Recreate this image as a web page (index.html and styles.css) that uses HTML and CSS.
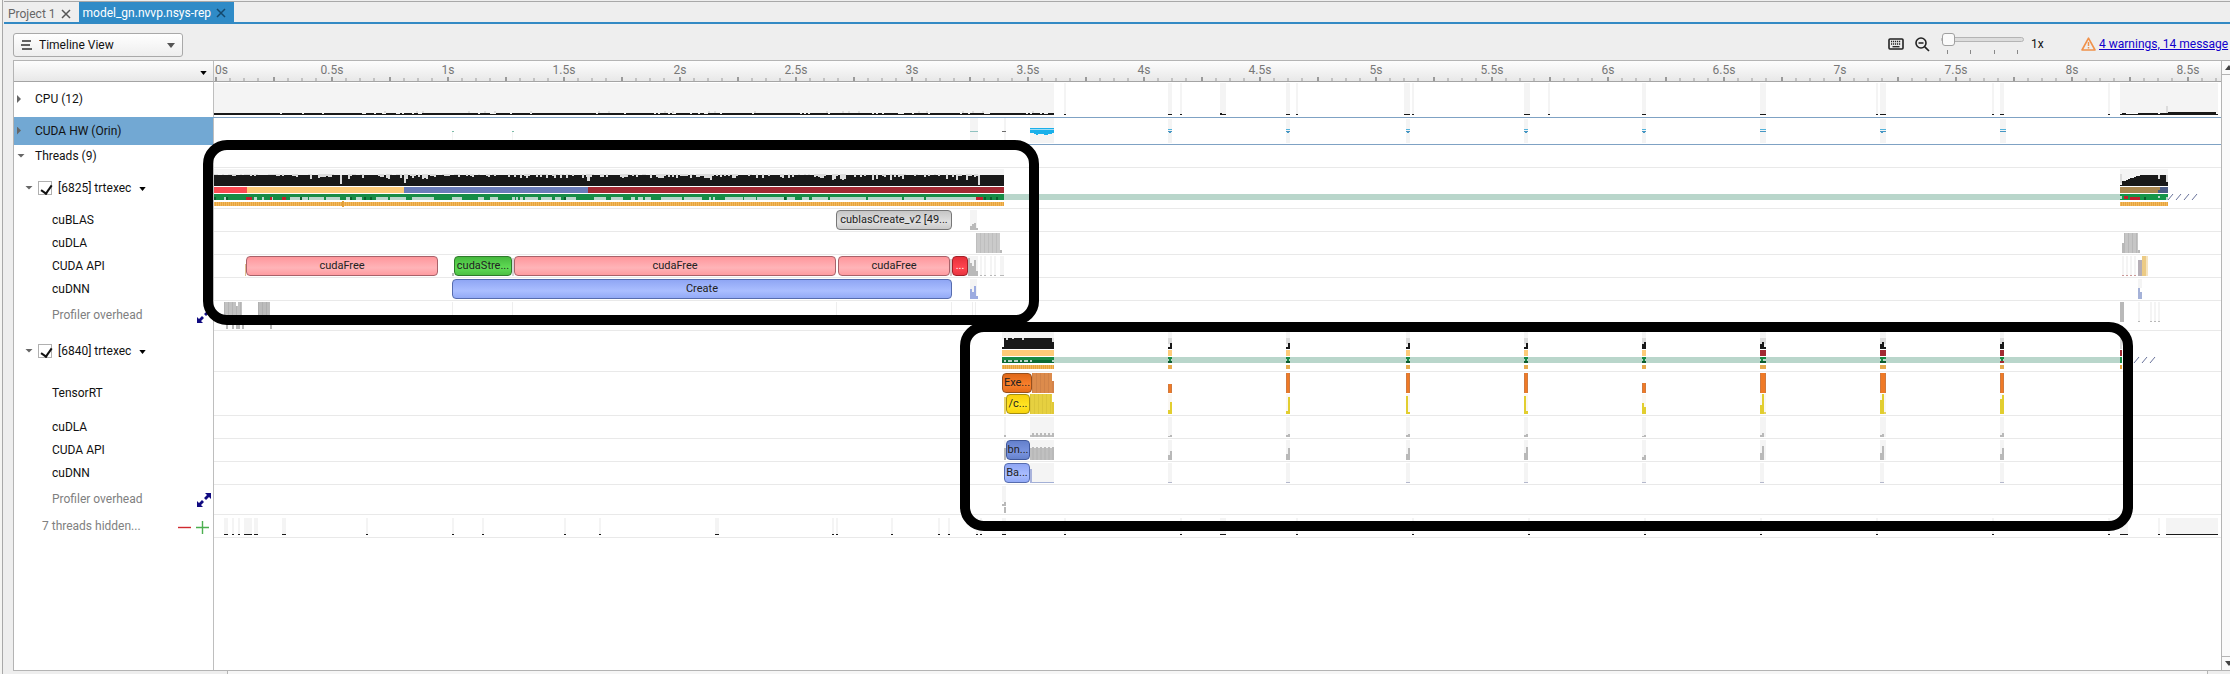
FILE: index.html
```html
<!DOCTYPE html>
<html lang="en">
<head>
<meta charset="utf-8">
<title>model_gn.nvvp.nsys-rep</title>
<link rel="stylesheet" href="styles.css">
</head>
<body>
<div class="window">
  <nav class="tabs">
    <div class="tab">
      <a class="tab-name" href="#project">Project 1</a>
      <button class="tab-close" aria-label="Close Project 1"><svg width="10" height="10" viewBox="0 0 10 10"><path d="M1 1l8 8M9 1l-8 8"/></svg></button>
    </div>
    <div class="tab tab-active">
      <a class="tab-name" href="#report">model_gn.nvvp.nsys-rep</a>
      <button class="tab-close" aria-label="Close report"><svg width="10" height="10" viewBox="0 0 10 10"><path d="M1 1l8 8M9 1l-8 8"/></svg></button>
    </div>
  </nav>

  <header class="toolbar">
    <div class="view-picker">
      <svg class="view-icon" width="11" height="10" viewBox="0 0 11 10"><path d="M1 1h9M0 5h9M1 9h10"/></svg>
      <select class="view-select" aria-label="View"><option>Timeline View</option></select>
      <svg class="view-caret" width="8" height="5" viewBox="0 0 8 5"><path d="M0 0h8L4 5z"/></svg>
    </div>
    <div class="tools">
      <button class="tool" aria-label="Keyboard shortcuts"><svg width="16" height="12" viewBox="0 0 16 12"><rect x="1" y="1" width="14" height="10" rx="1" fill="none" stroke="#222" stroke-width="1.6"/><path d="M3 3.5h10M3 6h10" stroke="#222" stroke-width="1.4" stroke-dasharray="1.2 .8"/><path d="M4.5 8.7h7" stroke="#222" stroke-width="1.3"/></svg></button>
      <button class="tool" aria-label="Zoom out"><svg width="15" height="15" viewBox="0 0 15 15"><circle cx="6" cy="6" r="5" fill="none" stroke="#222" stroke-width="1.6"/><path d="M3.5 6h5M9.8 9.8l4.2 4.2" stroke="#222" stroke-width="1.7"/></svg></button>
      <label class="zoom">
        <input class="zoom-range" type="range" min="1" max="10" value="1" aria-label="Zoom">
        <span class="zoom-ticks"><i></i><i></i><i></i><i></i></span>
      </label>
      <span class="zoom-value">1x</span>
      <svg class="warn-icon" width="15" height="14" viewBox="0 0 15 14"><path d="M7.5 1.2L14 13H1z" fill="none" stroke="#f0914a" stroke-width="1.6" stroke-linejoin="round"/><path d="M7.5 5v4M7.5 10v1.6" stroke="#f0914a" stroke-width="1.5"/></svg>
      <a class="messages" href="#messages">4 warnings, 14 message</a>
    </div>
  </header>

  <main class="frame">
    <div class="timeline">
      <div class="row ruler-row">
        <div class="label corner"><button class="menu" aria-label="Row options"><svg width="7" height="4" viewBox="0 0 8 5"><path d="M0 0h8L4 5z"/></svg></button></div>
        <div class="track ruler" id="ruler"></div>
      </div>
      <div class="row cpu"><div class="label level-0"><span class="fold closed"></span>CPU (12)</div><div class="track" data-track="cpu"></div></div>
      <div class="row hw"><div class="label level-0"><span class="fold closed"></span>CUDA HW (Orin)</div><div class="track" data-track="hw"></div></div>
      <div class="row"><div class="label level-0"><span class="fold"></span>Threads (9)</div><div class="track"></div></div>

      <div class="row thread">
        <div class="label level-1"><span class="fold"></span><label class="pick"><input class="check" type="checkbox" checked>[6825] trtexec</label><button class="menu" aria-label="Thread 6825 options"><svg width="7" height="4" viewBox="0 0 8 5"><path d="M0 0h8L4 5z"/></svg></button></div>
        <div class="track" data-track="t1"></div>
      </div>
      <div class="row"><div class="label level-2">cuBLAS</div><div class="track" data-track="blas1"></div></div>
      <div class="row"><div class="label level-2">cuDLA</div><div class="track" data-track="dla1"></div></div>
      <div class="row"><div class="label level-2">CUDA API</div><div class="track" data-track="api1"></div></div>
      <div class="row"><div class="label level-2">cuDNN</div><div class="track" data-track="dnn1"></div></div>
      <div class="row overhead"><div class="label level-2 muted">Profiler overhead<svg class="expand" width="14" height="14" viewBox="0 0 14 14"><path d="M8 0h6v6l-2-2-3 3-2-2 3-3zM6 14H0V8l2 2 3-3 2 2-3 3z"/></svg></div><div class="track" data-track="prof1"></div></div>

      <div class="row thread">
        <div class="label level-1"><span class="fold"></span><label class="pick"><input class="check" type="checkbox" checked>[6840] trtexec</label><button class="menu" aria-label="Thread 6840 options"><svg width="7" height="4" viewBox="0 0 8 5"><path d="M0 0h8L4 5z"/></svg></button></div>
        <div class="track" data-track="t2"></div>
      </div>
      <div class="row tensor"><div class="label level-2">TensorRT</div><div class="track" data-track="trt"></div></div>
      <div class="row"><div class="label level-2">cuDLA</div><div class="track" data-track="dla2"></div></div>
      <div class="row"><div class="label level-2">CUDA API</div><div class="track" data-track="api2"></div></div>
      <div class="row"><div class="label level-2">cuDNN</div><div class="track" data-track="dnn2"></div></div>
      <div class="row overhead"><div class="label level-2 muted">Profiler overhead<svg class="expand" width="14" height="14" viewBox="0 0 14 14"><path d="M8 0h6v6l-2-2-3 3-2-2 3-3zM6 14H0V8l2 2 3-3 2 2-3 3z"/></svg></div><div class="track" data-track="prof2"></div></div>
      <div class="row">
        <div class="label hidden-threads muted">7 threads hidden...
          <span class="steppers">
            <button class="step" aria-label="Show fewer threads"><svg width="13" height="13" viewBox="0 0 13 13"><path d="M0 6.5h13" stroke="#d02a30" stroke-width="1.4"/></svg></button>
            <button class="step" aria-label="Show more threads"><svg width="13" height="13" viewBox="0 0 13 13"><path d="M0 6.5h13M6.5 0v13" stroke="#4caf50" stroke-width="1.4"/></svg></button>
          </span>
        </div>
        <div class="track" data-track="hidden"></div>
      </div>
      <div class="row filler"><div class="label"></div><div class="track"></div></div>

      <div class="marks">
        <div class="mark mark-setup"></div>
        <div class="mark mark-run"></div>
      </div>
    </div>
    <div class="scrollbar">
      <button class="scroll-button" aria-label="Scroll up"><svg width="8" height="5" viewBox="0 0 8 5"><path d="M0 5h8L4 0z"/></svg></button>
      <button class="scroll-button scroll-down" aria-label="Scroll down"><svg width="8" height="5" viewBox="0 0 8 5"><path d="M0 0h8L4 5z"/></svg></button>
    </div>
  </main>
  <footer class="hscroll"></footer>
</div>
<script src="script.js"></script>
</body>
</html>
```
FILE: styles.css
```css
* { box-sizing: border-box; }

body {
  margin: 0;
  background: #f4f4f2;
  color: #111;
  font: 12px/16px Roboto, "Liberation Sans", sans-serif;
}

button {
  border: 0;
  padding: 0;
  background: none;
  font: inherit;
  color: inherit;
}

svg { display: block; }

.window {
  display: flex;
  flex-direction: column;
  height: 100vh;
  margin-left: 2px;
  padding-top: 1px;
  border-left: 1px solid #a8a8a8;
  background: #eee;
  overflow: hidden;
}

/* Document tabs */
.tabs {
  display: flex;
  flex: none;
  height: 23px;
  margin-left: 1px;
  border-top: 1px solid #a8a8a8;
  border-bottom: 2px solid #338ac4;
}

.tab {
  display: flex;
  align-items: center;
  gap: 5px;
  padding: 3px 8px 0 4px;
  color: #666;
  font-size: 12px;
}

.tab-active {
  padding: 1px 8px 0 4px;
  background: #2f8bc7;
  color: #fff;
}

.tab-name { color: inherit; text-decoration: none; }
.tab-close svg { fill: none; stroke: #555; stroke-width: 1.5; }
.tab-active .tab-close svg { stroke: #14486c; }

/* Toolbar */
.toolbar {
  display: flex;
  flex: none;
  justify-content: space-between;
  height: 36px;
  padding-left: 10px;
}

.view-picker {
  position: relative;
  width: 170px;
  height: 24px;
  margin-top: 9px;
}

.view-select {
  appearance: none;
  width: 100%;
  height: 100%;
  padding: 0 24px 0 25px;
  border: 1px solid #a9a9a9;
  border-radius: 3px;
  background: linear-gradient(#fff, #eee);
  color: #111;
  font: inherit;
}

.view-icon, .view-caret { position: absolute; pointer-events: none; }
.view-icon { left: 8px; top: 7px; fill: none; stroke: #333; stroke-width: 1.6; }
.view-caret { right: 8px; top: 10px; fill: #555; }

.tools {
  display: flex;
  flex: none;
  align-items: center;
  width: 342px;
  padding-top: 4px;
  white-space: nowrap;
}

.tool { flex: none; margin-right: 11px; }
.zoom { flex: none; width: 83px; height: 24px; margin-right: 7px; }

.zoom-range {
  display: block;
  appearance: none;
  width: 83px;
  height: 14px;
  margin: 0;
  background: none;
}

.zoom-range::-webkit-slider-runnable-track {
  height: 5px;
  border: 1px solid #b4b4b4;
  border-radius: 3px;
  background: #ddd;
}

.zoom-range::-webkit-slider-thumb {
  appearance: none;
  width: 13px;
  height: 13px;
  margin-top: -5px;
  border: 1px solid #a0a0a0;
  border-radius: 3px;
  background: #fafafa;
}

.zoom-ticks {
  display: flex;
  justify-content: space-between;
  margin-top: 4px;
  padding: 0 6px;
}

.zoom-ticks i { width: 1px; height: 4px; background: #888; }
.zoom-value { flex: none; width: 50px; }
.warn-icon { flex: none; margin-right: 3px; }
.messages { color: #10c; }

/* Timeline */
.frame {
  display: flex;
  flex: 1;
  min-height: 0;
  margin-left: 10px;
  border: 1px solid #b4b4b4;
  border-right: 0;
  background: #fff;
}

.timeline {
  position: relative;
  display: flex;
  flex-direction: column;
  flex: 1;
  min-width: 0;
}

.row {
  display: grid;
  grid-template-columns: 200px minmax(0, 1fr);
  flex: none;
  height: 23px;
}

.label {
  display: flex;
  align-items: center;
  padding-bottom: 2px;
  border-right: 1px solid #bebebe;
  white-space: nowrap;
}

.track {
  position: relative;
  border-bottom: 1px solid #e9e9e9;
}

.chart { width: 100%; height: 100%; }

.ruler-row { height: 21px; }
.corner, .ruler {
  border-bottom: 1px solid #a4a4a4;
  background: linear-gradient(#fdfdfd, #e8e8e8);
}
.corner { justify-content: flex-end; padding: 3px 6px 0 0; }

.tick-label {
  position: absolute;
  top: 1px;
  transform: translateX(-50%);
  color: #777;
}
.tick-label:first-of-type { transform: none; }

.cpu { height: 36px; }
.hw { height: 27px; }
.thread { height: 41px; }
.overhead { height: 30px; }
.tensor { height: 44px; }
.filler { flex: 1; height: auto; }
.filler .track { border-bottom: 0; }

.cpu .track, .hw .track { border-bottom-color: #7fa2c4; }
.hw .label { background: #72a8d3; box-shadow: 0 -1px #72a8d3; }

.level-0 { gap: 10px; padding-left: 3px; }
.level-1 { gap: 5px; padding-left: 11px; }
.level-2 { padding-left: 38px; }
.hidden-threads { padding-left: 28px; }
.muted { color: #808080; }

.fold {
  flex: none;
  width: 8px;
  height: 4px;
  background: #666;
  clip-path: polygon(0 0, 100% 0, 50% 100%);
}
.fold.closed {
  width: 4px;
  height: 8px;
  margin-right: 4px;
  clip-path: polygon(0 0, 100% 50%, 0 100%);
}

.pick { display: flex; align-items: center; gap: 6px; }

.check {
  appearance: none;
  position: relative;
  width: 14px;
  height: 14px;
  margin: 0;
  border: 1px solid #b0b0b0;
  background: #fff;
}
.check:checked::after {
  content: "";
  position: absolute;
  left: 4px;
  top: 1px;
  width: 5px;
  height: 9px;
  border: solid #111;
  border-width: 0 2px 2px 0;
  transform: rotate(35deg);
}

.level-1 .menu { margin: 3px 0 0 3px; }
.expand { margin: 2px 2px 0 auto; fill: #100a80; }
.steppers { display: flex; gap: 5px; margin: 4px 4px 0 auto; }

/* Events on the tracks */
.event {
  position: absolute;
  top: 1px;
  height: 20px;
  border: 1px solid;
  border-radius: 4px;
  color: #222;
  font-size: 11px;
  line-height: 16px;
  text-align: center;
  white-space: nowrap;
}
.event.second { top: 22px; }
.pink { border-color: #a8626a; background: linear-gradient(#ff979c, #ffb4b8 60%, #ff9ca1); }
.green { border-color: #2f7a2c; background: linear-gradient(#46b83e, #60dc55 60%, #4cc043); }
.red { border-color: #a02028; background: linear-gradient(#e6303a, #ff4550 60%, #e83540); color: #fff; }
.gray { border-color: #777; background: linear-gradient(#c6c6c6, #e0e0e0 60%, #cacaca); }
.blue { border-color: #566cae; background: linear-gradient(#8fa6f4, #aabeff 60%, #93aaf6); }
.indigo { border-color: #40589c; background: linear-gradient(#6480cc, #7b95e0 60%, #6682cc); }
.orange { border-color: #96501e; background: linear-gradient(#e06818, #f9802c 60%, #e46c1c); }
.yellow { border-color: #a48e12; background: linear-gradient(#f8d00c, #ffe424 60%, #f8d40e); }

/* Callout boxes over the tracks */
.marks {
  position: absolute;
  inset: 0 0 0 200px;
  pointer-events: none;
}
.mark {
  position: absolute;
  border: 10px solid #000;
  border-radius: 24px;
}
.mark-setup { left: -11px; right: 58.9%; top: 79px; height: 185px; }
.mark-run { left: 37.17%; right: 4.4%; top: 261px; height: 209px; }

/* Scrollbars */
.scrollbar {
  display: flex;
  flex-direction: column;
  justify-content: space-between;
  flex: none;
  width: 9px;
  border-left: 1px solid #b4b4b4;
  background: #fafafa;
  overflow: hidden;
}
.scroll-button { width: 14px; height: 14px; padding-left: 3px; border-bottom: 1px solid #b4b4b4; }
.scroll-button svg { fill: #444; }
.scroll-down { border-top: 1px solid #b4b4b4; border-bottom: 0; }
.hscroll {
  flex: none;
  height: 3px;
  margin: 0 22px 0 224px;
  border: 1px solid #b4b4b4;
  border-width: 0 1px;
  background: #f6f6f6;
}
```
FILE: script.js
```js
// Horizontal units: 232 units per second, first visible unit at ORIGIN.
const ORIGIN = 214;
const SPAN = 2007;
const percent = (u) => (u / SPAN) * 100 + "%";

let seed = 7;
const random = () => (seed = (seed * 16807) % 2147483647) / 2147483647;

const LIGHT = "#f4f4f4", BLACK = "#191919", MINT = "#b9d6cb", GREEN = "#168c46",
  GOLD = "#e8a43c", PEACH = "#fdcb79", WINE = "#a32a33", GRAY = "#b9b9b9";

const rect = (x, y, w, h, fill) =>
  `<rect x="${x - ORIGIN}" y="${y}" width="${w}" height="${h}" fill="${fill}"/>`;

function stripes(x, end, y, h, a, b, step = 4) {
  let out = rect(x, y, end - x, h, a);
  for (let i = x; i < end; i += step) out += rect(i, y, 1, h, b);
  return out;
}

function usage(x, end, depth) {
  let out = rect(x, 1, end - x, 6, LIGHT) + rect(x, 7, end - x, 11, BLACK);
  for (let i = x; i < end; i += 2) {
    const r = random();
    if (r < 0.55) {
      const d = Math.floor(random() * depth);
      out += rect(i, 6, 2, 1 + d, "#dcdcdc");
    }
  }
  return out;
}

const clusters = [[1168, 4], [1286, 4], [1406, 4], [1524, 4], [1642, 4], [1760, 6], [1880, 6], [2000, 4]];
const tracks = {};

// CPU usage
tracks.cpu = () => {
  let out = rect(214, 1, 840, 30, LIGHT) + rect(214, 31, 840, 2, BLACK) + rect(2120, 1, 98, 30, LIGHT);
  for (let i = 280; i < 1050; i += 2) {
    if (random() < 0.15) out += rect(i, 31, 2, 1, LIGHT);
    if (random() < 0.05) out += rect(i, 29, 2, 2, "#dedede");
  }
  [[1064, 2], [1168, 4], [1180, 2], [1220, 6], [1286, 4], [1296, 2], [1404, 6], [1412, 2], [1524, 6], [1548, 2],
    [1642, 4], [1760, 6], [1876, 2], [1880, 6], [1992, 2], [2000, 4], [2108, 2]].forEach(([x, w]) => {
    out += rect(x, 1, w, 31, LIGHT) + rect(x, 32, w, 1, BLACK);
  });
  out += rect(1220, 31, 2, 1, BLACK);
  out += rect(2120, 32, 98, 1, BLACK) + rect(2122, 31, 4, 1, BLACK) + rect(2138, 31, 20, 1, BLACK) + rect(2160, 31, 8, 1, BLACK);
  out += rect(2168, 30, 48, 3, BLACK) + rect(2166, 24, 2, 7, "#dcdcdc");
  return out;
};

// GPU activity
tracks.hw = () => {
  let out = rect(1030, 0, 24, 25, LIGHT) + rect(1030, 10, 24, 1, "#1ab0ea") + rect(1030, 11, 24, 1, "#9fdcf5");
  out += rect(1030, 12, 24, 3, "#1ab0ea") + rect(1034, 15, 18, 1, "#1ab0ea") + rect(1036, 16, 2, 1, "#1ab0ea") + rect(1044, 16, 4, 1, "#1ab0ea");
  out += rect(970, 0, 8, 25, LIGHT) + rect(970, 13, 8, 1, "#8fc2c0") + rect(1004, 0, 2, 25, LIGHT) + rect(1002, 13, 4, 1, "#6c6c6c");
  out += rect(452, 13, 2, 1, "#7dbba8") + rect(512, 13, 2, 1, "#7dbba8") + rect(452, 14, 1, 8, LIGHT) + rect(512, 14, 1, 8, LIGHT);
  clusters.forEach(([x, w], i) => {
    const width = i === 7 ? 6 : w;
    out += rect(x, 1, width, 24, LIGHT) + rect(x, 11, width, 1, "#54b4dc") + rect(x, 13, width, 1, "#4697c4");
    if (i !== 5 && i !== 7) out += rect(x + 1, 14, 2, 1, "#4697c4");
  });
  return out;
};

const hatch = (x, end) => {
  let d = "";
  for (let i = x - ORIGIN; i < end - ORIGIN; i += 8) d += `M${i} 32l5 -6`;
  return `<path d="${d}" fill="none" stroke="#68729a" stroke-width="1" shape-rendering="auto"/>`;
};

// Main thread
tracks.t1 = () => {
  let out = usage(214, 240, 2) + usage(240, 284, 2) + usage(284, 430, 5) + usage(430, 512, 3) + usage(512, 830, 4) + usage(830, 978, 6);
  out += rect(978, 1, 26, 6, LIGHT) + rect(978, 7, 26, 11, BLACK) + rect(978, 7, 2, 10, "#dcdcdc");
  out += rect(340, 7, 2, 9, "#dcdcdc") + rect(404, 7, 2, 8, "#dcdcdc") + rect(587, 7, 3, 6, "#dcdcdc") + rect(710, 7, 2, 5, "#dcdcdc");
  out += rect(214, 19, 33, 6, "#fb4a52") + rect(247, 19, 157, 6, PEACH) + rect(404, 19, 184, 6, "#6a7cb9") + rect(588, 19, 416, 6, WINE);
  out += rect(214, 26, 790, 6, GREEN) + rect(1004, 26, 1116, 6, MINT);
  [[224, 4], [248, 2], [254, 3], [262, 2], [270, 3], [290, 18], [309, 15], [326, 14], [346, 6], [356, 6], [376, 12], [390, 16],
    [412, 22], [452, 10], [478, 6], [490, 8], [512, 3], [516, 2], [520, 3], [525, 13], [541, 11], [555, 6], [566, 10], [594, 12],
    [611, 12], [631, 4], [638, 5], [645, 6], [661, 21], [684, 18], [709, 2], [713, 2], [725, 18], [744, 12], [757, 28], [787, 8],
    [802, 7], [812, 16], [830, 36], [868, 34], [904, 20], [926, 50]].forEach(([x, w]) => {
    out += rect(x, 29, w, 3, MINT);
  });
  [[246, 4], [250, 2], [270, 2], [282, 4], [976, 4], [980, 3]].forEach(([x, w]) => { out += rect(x, 29, w, 3, "#c01f2c"); });
  [214, 226, 300, 350, 364, 370, 564, 784, 984, 990, 996].forEach((x) => { out += rect(x, 29, 2, 3, "#0c5c2c"); });
  out += stripes(214, 1004, 34, 4, GOLD, "#f1b95e", 2) + rect(342, 33, 2, 6, "#e3a03a");
  // Shutdown phase
  out += rect(2120, 1, 48, 17, LIGHT) + rect(2120, 6, 2, 9, "#dcdcdc");
  for (let i = 0; i < 24; i++) {
    const top = i === 0 ? 17 : i < 10 ? 14 - Math.round(i * 0.7) : 7;
    out += rect(2120 + i * 2, top, 2, 18 - top, BLACK);
  }
  out += rect(2158, 7, 2, 4, "#dcdcdc") + rect(2166, 7, 2, 7, "#dcdcdc");
  out += rect(2120, 19, 38, 6, "#aa8850") + rect(2158, 19, 10, 6, "#4b5c86") + rect(2158, 19, 2, 3, "#aa8850");
  out += rect(2120, 26, 48, 6, "#15964a") + rect(2124, 28, 4, 3, "#c01f2c") + rect(2130, 29, 10, 3, "#c01f2c");
  out += rect(2120, 28, 2, 3, MINT) + rect(2158, 28, 2, 2, MINT) + rect(2166, 29, 2, 3, MINT) + rect(2144, 29, 2, 3, "#0c5c2c");
  out += stripes(2120, 2168, 34, 4, GOLD, "#f1b95e", 2) + hatch(2168, 2200);
  return out;
};

tracks.blas1 = () => rect(970, 1, 7, 20, LIGHT) + rect(970, 17, 2, 4, GRAY) + rect(972, 15, 2, 6, GRAY) + rect(974, 14, 2, 7, GRAY) + rect(976, 19, 2, 2, GRAY);
tracks.dla1 = () => stripes(976, 1000, 1, 20, "#cacaca", "#bebebe") + rect(1000, 18, 2, 3, GRAY) +
  stripes(2124, 2138, 1, 20, "#c6c6c6", "#b8b8b8") + rect(2122, 11, 2, 10, GRAY) + rect(2138, 18, 2, 3, GRAY);
tracks.api1 = () => {
  let out = rect(245, 9, 1, 12, "#e0c090") + rect(968, 1, 10, 20, LIGHT);
  [[968, 18], [970, 13], [972, 10], [974, 16], [976, 5]].forEach(([x, h]) => { out += rect(x, 21 - h, 2, h, GRAY); });
  [980, 984, 990, 994, 1000, 1002].forEach((x) => { out += rect(x, 1, 2, 20, LIGHT) + rect(x, 20, 2, 1, GRAY); });
  out += rect(452, 18, 2, 3, GRAY) + rect(512, 3, 2, 18, "#d6d6d6") + rect(950, 4, 2, 17, "#d6c8c8");
  [2122, 2126, 2130, 2134].forEach((x) => { out += rect(x, 1, 2, 20, LIGHT) + rect(x, 20, 2, 1, "#c99"); });
  out += rect(2138, 5, 4, 16, "#b5aeb6") + rect(2142, 1, 4, 20, "#eccb85") + rect(2146, 1, 2, 20, "#f6e4bf");
  return out;
};
tracks.dnn1 = () => rect(970, 1, 7, 20, LIGHT) + rect(970, 11, 2, 10, "#9cabe0") + rect(972, 14, 2, 7, "#9cabe0") + rect(974, 8, 2, 13, "#9cabe0") +
  rect(976, 18, 2, 3, "#9cabe0") + rect(2138, 1, 4, 9, LIGHT) + rect(2138, 10, 2, 11, "#a5b2d8") + rect(2140, 14, 2, 7, "#a5b2d8");
tracks.prof1 = () => {
  let out = stripes(224, 242, 1, 20, "#c2c2c2", "#b4b4b4") + rect(236, 1, 2, 4, "#fff") + stripes(258, 270, 1, 20, "#bcbcbc", "#b0b0b0");
  [226, 232, 236, 238, 242, 270].forEach((x) => { out += rect(x, 21, 2, 7, GRAY); });
  [452, 512, 836, 951, 972, 975].forEach((x) => { out += rect(x, 1, 1, 20, "#eee"); });
  out += rect(2120, 1, 4, 20, GRAY);
  [2138, 2150, 2154, 2158].forEach((x) => { out += rect(x, 1, 2, 19, LIGHT) + rect(x, 20, 2, 1, GRAY); });
  return out;
};

// Worker thread
tracks.t2 = () => {
  let out = rect(1054, 26, 1066, 6, MINT) + rect(1002, 1, 52, 7, LIGHT) + rect(1004, 7, 50, 11, BLACK) + rect(1002, 16, 2, 2, BLACK);
  [[1006, 2], [1012, 1], [1022, 2], [1052, 4]].forEach(([x, h]) => { out += rect(x, 7, 2, h, "#dcdcdc"); });
  out += rect(1002, 19, 52, 6, PEACH) + rect(1002, 26, 52, 3, "#188a44") + rect(1002, 29, 52, 3, "#0e6a34");
  [[1004, 2], [1008, 4], [1014, 4], [1020, 2], [1024, 4], [1030, 2], [1052, 2]].forEach(([x, w]) => { out += rect(x, 29, w, 2, MINT); });
  out += stripes(1002, 1054, 34, 4, GOLD, "#f1b95e", 2);
  clusters.forEach(([x, w], i) => {
    out += rect(x, 1, w, 17, LIGHT) + rect(x, 7, w, 6, "#dcdcdc") + rect(x, 16, w, 2, BLACK);
    out += i < 4 ? rect(x + 2, 12, 2, 6, BLACK) : rect(x, 13, 4, 5, BLACK) + rect(x + 2, 11, 2, 7, BLACK);
    out += rect(x, 19, w, 6, i < 5 ? PEACH : WINE) + rect(x, 26, w, 2, "#188a44") + rect(x, 30, w, 2, i === 7 ? WINE : "#0e5c30") + rect(x + 1, 28, 2, 2, "#188a44");
    out += rect(x, 34, w, 4, "#e6ac50");
  });
  out += rect(2120, 1, 2, 17, "#dcdcdc") + rect(2120, 19, 2, 6, WINE) + rect(2120, 26, 2, 6, GREEN) + rect(2120, 34, 2, 4, GOLD) + hatch(2134, 2152);
  return out;
};
tracks.trt = () => {
  let out = stripes(1032, 1052, 1, 20, "#dc8b4c", "#d08248") + rect(1052, 9, 2, 12, "#d4824a");
  out += stripes(1030, 1052, 22, 20, "#e6d040", "#dcc63a") + rect(1052, 30, 2, 12, "#e0c838") + rect(1004, 25, 2, 17, "#ead56a");
  const heights = [[9, 4, 12], [20, 3, 17], [20, 18, 2], [20, 18, 3], [10, 11, 7], [20, 9, 20], [20, 14, 20], [20, 15, 19]];
  clusters.forEach(([x, w], i) => {
    const [run, first, second] = heights[i];
    out += rect(x, 21 - run, w, run, "#cf7a40") + rect(x + 1, 21 - run, w - 2, run, "#f07a26");
    out += rect(x, 22, w, 20, "#faf7f2") + rect(x, 42 - first, 2, first, "#e2ce30") + rect(x + 2, 42 - second, 2, second, "#e2ce30");
    if (w > 4) out += rect(x + 4, 40, 2, 2, "#e6d668");
  });
  return out;
};

function bottomBars(low, high, peaks) {
  let out = rect(1030, 1, 24, 20, LIGHT) + rect(1004, 1, 2, 20, LIGHT) + rect(1004, 21 - low, 2, low, GRAY);
  for (let i = 1030; i < 1054; i += 2) {
    const h = i % 4 ? low : high;
    out += rect(i, 21 - h, 2, h, i % 4 ? "#c0c0c0" : GRAY);
  }
  clusters.forEach(([x, w], i) => {
    out += rect(x, 1, w, 20, LIGHT) + rect(x, 21 - Math.ceil(peaks[i] / 2), 2, Math.ceil(peaks[i] / 2), GRAY) + rect(x + 2, 21 - peaks[i], 2, peaks[i], GRAY);
  });
  return out;
}
tracks.dla2 = () => bottomBars(2, 4, [2, 3, 3, 3, 2, 4, 3, 4]);
tracks.api2 = () => bottomBars(12, 13, [9, 12, 12, 13, 5, 14, 14, 12]);
tracks.dnn2 = () => {
  let out = rect(1030, 1, 24, 20, LIGHT) + rect(1030, 7, 2, 14, "#a9b3dc") + rect(1032, 20, 22, 1, "#a3b0d6");
  clusters.forEach(([x]) => { out += rect(x, 1, 4, 19, LIGHT) + rect(x, 20, 4, 1, "#b4b8cc"); });
  return out;
};
tracks.prof2 = () => rect(1002, 1, 4, 16, LIGHT) + rect(1002, 19, 4, 2, GRAY) + rect(1004, 17, 2, 4, GRAY) + rect(1004, 22, 2, 6, GRAY);

tracks.hidden = () => {
  let out = "";
  [[224, 4], [232, 2], [238, 2], [244, 8], [254, 4], [282, 4], [366, 2], [452, 2], [482, 2], [564, 2], [599, 2], [715, 4], [832, 2],
    [836, 2], [891, 2], [938, 2], [948, 2], [976, 2], [980, 2], [1002, 4], [1064, 2], [1180, 2], [1220, 6], [1296, 2], [1412, 2],
    [1528, 2], [1644, 2], [1760, 2], [1876, 2], [1992, 2], [2108, 2], [2120, 8], [2158, 2], [2166, 52]].forEach(([x, w]) => {
    out += rect(x, 3, w, 16, LIGHT) + rect(x, 19, w, 1, BLACK);
  });
  return out;
};

// Labelled events: [start, end, text, colour, second line]
const events = {
  blas1: [[836, 952, "cublasCreate_v2 [49...", "gray"]],
  api1: [[246, 438, "cudaFree", "pink"], [454, 512, "cudaStre...", "green"], [514, 836, "cudaFree", "pink"],
    [838, 950, "cudaFree", "pink"], [952, 968, "...", "red"]],
  dnn1: [[452, 952, "Create", "blue"]],
  trt: [[1002, 1032, "Exe...", "orange"], [1006, 1030, "/c...", "yellow", true]],
  api2: [[1006, 1030, "bn...", "indigo"]],
  dnn2: [[1004, 1030, "Ba...", "blue"]],
};

document.querySelectorAll("[data-track]").forEach((track) => {
  const name = track.dataset.track;
  const height = track.clientHeight;
  track.innerHTML = `<svg class="chart" viewBox="0 0 ${SPAN} ${height}" preserveAspectRatio="none" shape-rendering="crispEdges">${tracks[name]()}</svg>`;
  (events[name] || []).forEach(([start, end, text, colour, second]) => {
    const event = document.createElement("button");
    event.className = `event ${colour}${second ? " second" : ""}`;
    event.style.left = percent(start - ORIGIN);
    event.style.width = percent(end - start);
    event.textContent = text;
    track.append(event);
  });
});

const ruler = document.getElementById("ruler");
let ticks = "";
for (let i = 0; i < 139; i++) {
  const x = 216 + Math.floor((i * 14.5) / 2) * 2;
  ticks += i % 4 ? rect(x - 1, 17, 2, 3, "#c2c2c2") : rect(x - 1, 16, 2, 4, "#9a9a9a");
}
ruler.innerHTML = `<svg class="chart" viewBox="0 0 ${SPAN} 20" preserveAspectRatio="none">${ticks}</svg>`;
for (let half = 0; half <= 17; half++) {
  const label = document.createElement("span");
  label.className = "tick-label";
  label.textContent = half / 2 + "s";
  label.style.left = percent(half ? 2 + half * 116 : 1);
  ruler.append(label);
}
```
